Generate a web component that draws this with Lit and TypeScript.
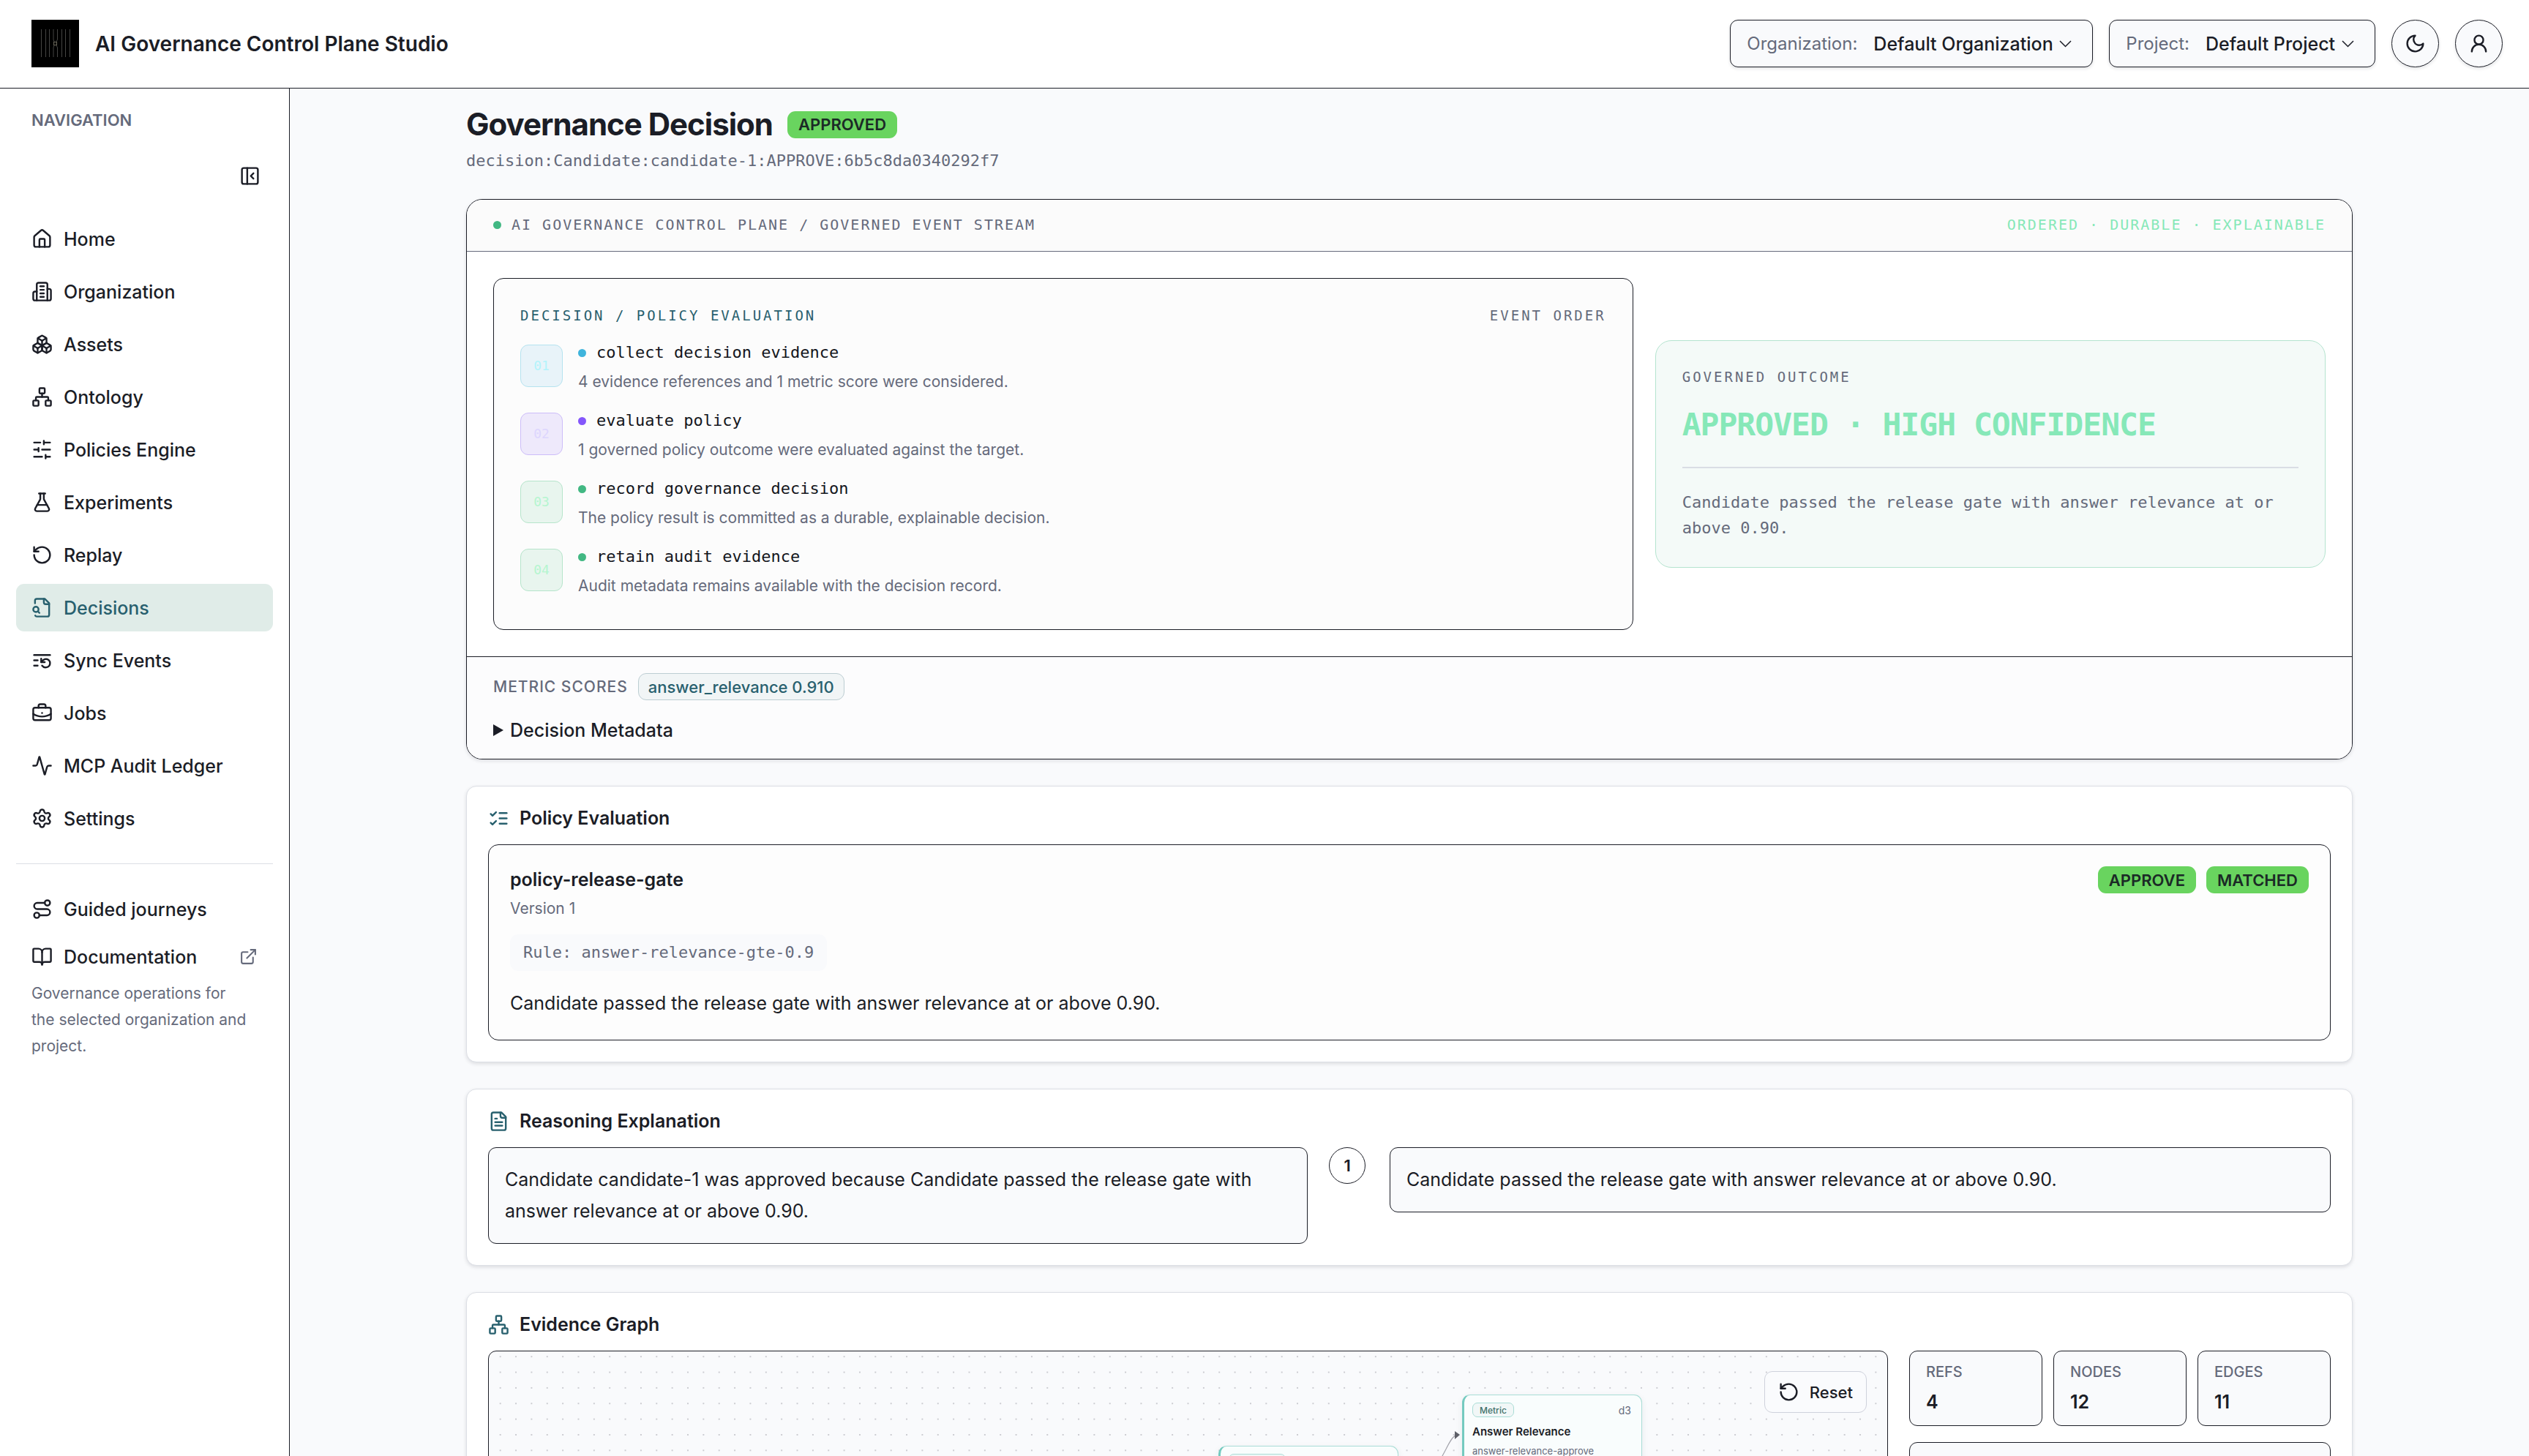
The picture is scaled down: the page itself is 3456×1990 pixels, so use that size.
import { LitElement, html, css, svg, nothing, type TemplateResult } from "lit";
import { customElement, property } from "lit/decorators.js";

/* Stroke icons on a 24-unit grid */
const ICONS: Record<string, TemplateResult> = {
  home: svg`<path d="M15 21v-8a1 1 0 0 0-1-1h-4a1 1 0 0 0-1 1v8"/><path d="M3 10a2 2 0 0 1 .709-1.528l7-6a2 2 0 0 1 2.582 0l7 6A2 2 0 0 1 21 10v9a2 2 0 0 1-2 2H5a2 2 0 0 1-2-2z"/>`,
  building: svg`<path d="M6 22V4a2 2 0 0 1 2-2h8a2 2 0 0 1 2 2v18Z"/><path d="M6 12H4a2 2 0 0 0-2 2v6a2 2 0 0 0 2 2h2"/><path d="M18 9h2a2 2 0 0 1 2 2v9a2 2 0 0 1-2 2h-2"/><path d="M10 6h4"/><path d="M10 10h4"/><path d="M10 14h4"/><path d="M10 18h4"/>`,
  boxes: svg`<path d="M2.97 12.92A2 2 0 0 0 2 14.63v3.24a2 2 0 0 0 .97 1.71l3 1.8a2 2 0 0 0 2.06 0L12 19v-5.5l-5-3-4.03 2.42Z"/><path d="m7 16.5-4.74-2.85"/><path d="m7 16.5 5-3"/><path d="M7 16.5v5.17"/><path d="M12 13.5V19l3.97 2.38a2 2 0 0 0 2.06 0l3-1.8a2 2 0 0 0 .97-1.71v-3.24a2 2 0 0 0-.97-1.71L17 10.5l-5 3Z"/><path d="m17 16.5-5-3"/><path d="m17 16.5 4.74-2.85"/><path d="M17 16.5v5.17"/><path d="M7.97 4.42A2 2 0 0 0 7 6.13v4.37l5 3 5-3V6.13a2 2 0 0 0-.97-1.71l-3-1.8a2 2 0 0 0-2.06 0l-3 1.8Z"/><path d="M12 8 7.26 5.15"/><path d="m12 8 4.74-2.85"/><path d="M12 13.5V8"/>`,
  network: svg`<rect x="16" y="16" width="6" height="6" rx="1"/><rect x="2" y="16" width="6" height="6" rx="1"/><rect x="9" y="2" width="6" height="6" rx="1"/><path d="M5 16v-3a1 1 0 0 1 1-1h12a1 1 0 0 1 1 1v3"/><path d="M12 12V8"/>`,
  sliders: svg`<path d="M21 4H14M10 4H3M21 12H12M8 12H3M21 20H16M12 20H3M14 2v4M8 10v4M16 18v4"/>`,
  flask: svg`<path d="M14 2v6a2 2 0 0 0 .245.96l5.51 10.08A2 2 0 0 1 18 22H6a2 2 0 0 1-1.755-2.96l5.51-10.08A2 2 0 0 0 10 8V2"/><path d="M6.453 15h11.094"/><path d="M8.5 2h7"/>`,
  replay: svg`<path d="M3 12a9 9 0 1 0 9-9 9.75 9.75 0 0 0-6.74 2.74L3 8"/><path d="M3 3v5h5"/>`,
  decisions: svg`<path d="M14 2v4a2 2 0 0 0 2 2h4"/><path d="M4.268 21a2 2 0 0 0 1.727 1H18a2 2 0 0 0 2-2V7l-5-5H6a2 2 0 0 0-2 2v3"/><path d="m9 18-1.5-1.5"/><circle cx="5" cy="14" r="3"/>`,
  sync: svg`<path d="M21 6H3"/><path d="M7 12H3"/><path d="M7 18H3"/><path d="M12 18a5 5 0 0 0 9-3 4.5 4.5 0 0 0-4.5-4.5c-1.33 0-2.54.54-3.41 1.41L11 14"/><path d="M11 10v4h4"/>`,
  briefcase: svg`<path d="M12 12h.01"/><path d="M16 6V4a2 2 0 0 0-2-2h-4a2 2 0 0 0-2 2v2"/><path d="M22 13a18.15 18.15 0 0 1-20 0"/><rect width="20" height="14" x="2" y="6" rx="2"/>`,
  activity: svg`<path d="M22 12h-2.48a2 2 0 0 0-1.93 1.46l-2.35 8.36a.25.25 0 0 1-.48 0L9.24 2.18a.25.25 0 0 0-.48 0l-2.35 8.36A2 2 0 0 1 4.49 12H2"/>`,
  settings: svg`<path d="M9.671 4.136a2.34 2.34 0 0 1 4.659 0 2.34 2.34 0 0 0 3.319 1.915 2.34 2.34 0 0 1 2.33 4.033 2.34 2.34 0 0 0 0 3.831 2.34 2.34 0 0 1-2.33 4.033 2.34 2.34 0 0 0-3.319 1.915 2.34 2.34 0 0 1-4.659 0 2.34 2.34 0 0 0-3.32-1.915 2.34 2.34 0 0 1-2.33-4.033 2.34 2.34 0 0 0 0-3.831A2.34 2.34 0 0 1 6.35 6.051a2.34 2.34 0 0 0 3.319-1.915"/><circle cx="12" cy="12" r="3"/>`,
  route: svg`<circle cx="6" cy="19" r="3"/><path d="M9 19h8.5a3.5 3.5 0 0 0 0-7h-11a3.5 3.5 0 0 1 0-7H15"/><circle cx="18" cy="5" r="3"/>`,
  book: svg`<path d="M12 7v14"/><path d="M3 18a1 1 0 0 1-1-1V4a1 1 0 0 1 1-1h5a4 4 0 0 1 4 4 4 4 0 0 1 4-4h5a1 1 0 0 1 1 1v13a1 1 0 0 1-1 1h-6a3 3 0 0 0-3 3 3 3 0 0 0-3-3z"/>`,
  external: svg`<path d="M15 3h6v6"/><path d="M10 14 21 3"/><path d="M18 13v6a2 2 0 0 1-2 2H5a2 2 0 0 1-2-2V8a2 2 0 0 1 2-2h6"/>`,
  checks: svg`<path d="m3 17 2 2 4-4"/><path d="m3 7 2 2 4-4"/><path d="M13 6h8"/><path d="M13 12h8"/><path d="M13 18h8"/>`,
  document: svg`<path d="M15 2H6a2 2 0 0 0-2 2v16a2 2 0 0 0 2 2h12a2 2 0 0 0 2-2V7Z"/><path d="M14 2v4a2 2 0 0 0 2 2h4"/><path d="M10 9H8"/><path d="M16 13H8"/><path d="M16 17H8"/>`,
  moon: svg`<path d="M12 3a6 6 0 0 0 9 9 9 9 0 1 1-9-9Z"/>`,
  user: svg`<circle cx="12" cy="8" r="5"/><path d="M20 21a8 8 0 0 0-16 0"/>`,
  collapse: svg`<rect width="18" height="18" x="3" y="3" rx="2"/><path d="M9 3v18"/><path d="m16 15-3-3 3-3"/>`,
};

@customElement("line-icon")
class LineIcon extends LitElement {
  @property() name = "";
  static styles = css`
    :host { display: inline-flex; flex: none; width: 29px; height: 29px; }
    svg { width: 100%; height: 100%; fill: none; stroke: currentColor; stroke-width: 2; stroke-linecap: round; stroke-linejoin: round; }
  `;
  render() {
    return html`<svg viewBox="0 0 24 24" aria-hidden="true">${ICONS[this.name]}</svg>`;
  }
}

const NAV = [
  { label: "Home", icon: "home" },
  { label: "Organization", icon: "building" },
  { label: "Assets", icon: "boxes" },
  { label: "Ontology", icon: "network" },
  { label: "Policies Engine", icon: "sliders" },
  { label: "Experiments", icon: "flask" },
  { label: "Replay", icon: "replay" },
  { label: "Decisions", icon: "decisions", active: true },
  { label: "Sync Events", icon: "sync" },
  { label: "Jobs", icon: "briefcase" },
  { label: "MCP Audit Ledger", icon: "activity" },
  { label: "Settings", icon: "settings" },
];

const STEPS = [
  { no: "01", tone: "cyan", title: "collect decision evidence", text: "4 evidence references and 1 metric score were considered." },
  { no: "02", tone: "violet", title: "evaluate policy", text: "1 governed policy outcome were evaluated against the target." },
  { no: "03", tone: "green", title: "record governance decision", text: "The policy result is committed as a durable, explainable decision." },
  { no: "04", tone: "green", title: "retain audit evidence", text: "Audit metadata remains available with the decision record." },
];

const STATS = [
  { label: "REFS", value: 4 },
  { label: "NODES", value: 12 },
  { label: "EDGES", value: 11 },
];

const NODES = [
  { kind: "Metric", depth: "d3", title: "Answer Relevance", id: "answer-relevance-approve", x: 1330, y: 59 },
  { kind: "", depth: "", title: "", id: "", x: 997, y: 129 },
];

@customElement("app-root")
class AppRoot extends LitElement {
  static styles = css`
    :host {
      --ink: #1b1d26;
      --muted: #656a7b;
      --teal: #28606e;
      --page: #f9fafc;
      --soft: #dcdfe5;
      --mono: "DejaVu Sans Mono", "Liberation Mono", monospace;
      display: flex;
      flex-direction: column;
      height: 100vh;
      overflow: hidden;
      background: #fff;
      color: var(--ink);
      font: 400 25px/36px Inter, "Liberation Sans", sans-serif;
    }
    * { box-sizing: border-box; }
    h1, h2, h3, p, ul, ol, dl, dd { margin: 0; padding: 0; }
    ul, ol { list-style: none; }
    button, select { font: inherit; color: inherit; }
    a { color: inherit; text-decoration: none; }

    .topbar { flex: none; display: flex; justify-content: space-between; align-items: flex-start; padding: 27px 36px 28px 43px; border-bottom: 1px solid var(--ink); }
    .brand { display: flex; align-items: center; gap: 22px; font-size: 28px; font-weight: 600; }
    .logo { width: 65px; height: 65px; display: block; }
    .tools { display: flex; gap: 22px; }
    .picker, .round { border: 1px solid var(--ink); background: var(--page); box-shadow: 0 2px 4px rgba(20, 24, 40, 0.12); }
    .picker { display: flex; align-items: center; height: 65px; padding: 0 28px 0 22px; border-radius: 11px; }
    .picker-label { color: var(--muted); margin-right: 22px; font-size: 24px; }
    .picker select { appearance: none; border: 0; padding: 0; margin: 0; background: none; font-weight: 500; outline: none; }
    .chev { width: 17px; height: 10px; margin-left: 8px; fill: none; stroke: var(--ink); stroke-width: 1.5; }
    .round { display: flex; align-items: center; justify-content: center; width: 65px; height: 65px; padding: 0; border-radius: 50%; }

    .body { flex: 1; min-height: 0; display: flex; }
    .sidebar { flex: none; display: flex; flex-direction: column; width: 396px; padding: 22px; border-right: 1px solid var(--ink); font-weight: 500; }
    .nav-title { padding: 3px 21px 5px; font-size: 22px; line-height: 36px; font-weight: 600; color: var(--muted); }
    .collapse { align-self: flex-end; display: flex; margin: 39px 17px 39px 0; padding: 0; border: 0; background: none; }
    .nav-list { display: flex; flex-direction: column; gap: 7px; }
    .nav-link { display: flex; align-items: center; gap: 15px; height: 65px; padding: 0 21px; border-radius: 11px; }
    .nav-link.active { background: #e0ece8; color: var(--teal); }
    .nav-foot { margin-top: 29px; padding-top: 29px; border-top: 1px solid var(--soft); }
    .ext { width: 25px; height: 25px; margin-left: auto; color: var(--muted); }
    .nav-note { padding: 0 32px 0 21px; font-size: 21px; font-weight: 400; color: var(--muted); }

    main { flex: 1; min-width: 0; overflow-y: auto; scrollbar-width: none; background: var(--page); }
    .content { max-width: 2578px; margin: 0 auto; padding: 24px 0 60px; display: flex; flex-direction: column; gap: 36px; }
    .title-row { display: flex; align-items: center; gap: 20px; }
    h1 { font-size: 42px; line-height: 50px; font-weight: 700; letter-spacing: -1px; }
    .badge { display: inline-flex; align-items: center; height: 37px; padding: 0 15px; border-radius: 11px; background: #69d45f; color: #1b2a26; font-size: 22px; line-height: 30px; font-weight: 600; }
    .ident { margin-top: 8px; font: 22px/33px var(--mono); color: var(--muted); }

    .card { border: 1px solid var(--soft); border-radius: 14px; background: #fff; box-shadow: 0 2px 5px rgba(20, 24, 40, 0.13); }
    .card.decision { border-color: var(--ink); border-radius: 22px; overflow: hidden; }
    .card.section { padding: 29px; }
    .box { border: 1px solid var(--ink); border-radius: 14px; background: var(--page); }
    .caps { font: 20px/30px var(--mono); letter-spacing: 2px; color: var(--muted); }
    .caps.wide { font-size: 19px; letter-spacing: 3px; }
    .caps.teal { color: var(--teal); }
    .caps.mint { color: #86e8b8; }
    .stream-head { display: flex; justify-content: space-between; align-items: center; height: 71px; padding: 0 36px 2px; background: #fbfbfb; border-bottom: 1px solid var(--muted); }
    .dot { flex: none; width: 11px; height: 11px; border-radius: 50%; background: #42b883; }
    .stream-name { display: flex; align-items: center; gap: 14px; }
    .stream-body { display: grid; grid-template-columns: minmax(0, 17fr) minmax(0, 10fr); gap: 30px; align-items: center; padding: 36px; }
    .steps-box { padding: 35px 36px 41px; background: #fcfcfc; }
    .steps-head { display: flex; justify-content: space-between; margin-bottom: 18px; }
    .steps { display: flex; flex-direction: column; gap: 17px; }
    .step { display: flex; gap: 21px; }
    .step-no { flex: none; display: flex; align-items: center; justify-content: center; width: 58px; height: 58px; margin-top: 7px; border: 1px solid; border-radius: 11px; font: 18px/24px var(--mono); }
    .cyan .step-no { background: #e8f3f9; border-color: #b5e3ef; color: #b3f3fc; }
    .violet .step-no { background: #eee9fb; border-color: #cdbdf9; color: #ddd6fe; }
    .green .step-no { background: #e8f5ee; border-color: #b6e5cb; color: #b5f5d0; }
    .cyan .dot { background: #3fb4dc; }
    .violet .dot { background: #8456fb; }
    .step-title { display: flex; align-items: center; gap: 14px; font: 22px/36px var(--mono); color: #14161c; }
    .step-text { margin-top: 4px; font-size: 21px; color: var(--muted); }
    .outcome { padding: 36px; border: 1px solid #b4e4cf; border-radius: 22px; background: #f4faf8; }
    .outcome .caps { line-height: 26px; }
    .verdict { margin-top: 22px; font: 700 43px/60px var(--mono); letter-spacing: -1px; color: #86e8b8; }
    .reason { margin-top: 28px; padding-top: 29px; border-top: 2px solid #d9dde4; font: 22px/35px var(--mono); color: var(--muted); }
    .stream-foot { display: flex; flex-direction: column; gap: 23px; padding: 22px 36px 21px; background: #fcfcfd; border-top: 1px solid var(--ink); }
    .scores { display: flex; align-items: center; gap: 14px; line-height: 30px; font-weight: 500; color: var(--muted); }
    .scores-label { font-size: 21px; letter-spacing: 1px; }
    .chip { display: inline-flex; align-items: center; height: 37px; padding: 0 13px; border: 1px solid #bccdd2; border-radius: 11px; background: #f1f5f6; color: var(--teal); font-size: 22px; }
    summary { display: flex; align-items: center; gap: 9px; font-weight: 500; list-style: none; }
    summary::before { content: ""; border-left: 14px solid var(--ink); border-top: 8px solid transparent; border-bottom: 8px solid transparent; }

    .head { display: flex; align-items: center; gap: 14px; margin-bottom: 21px; line-height: 29px; font-size: 25px; font-weight: 600; }
    .head line-icon { color: var(--teal); }
    .policy { display: flex; flex-direction: column; align-items: flex-start; padding: 29px; background: #fdfdfd; }
    .policy-top { align-self: stretch; display: flex; justify-content: space-between; align-items: flex-start; }
    .policy h3 { font-size: 25px; font-weight: 600; }
    .badges { display: flex; gap: 14px; }
    .version { margin-top: 6px; font-size: 21px; line-height: 30px; color: var(--muted); }
    .rule { margin: 20px 0 24px; padding: 7px 18px; border-radius: 11px; background: #f9fafc; font: 22px/36px var(--mono); color: var(--muted); }
    .policy-text { line-height: 41px; }

    .reasoning { display: grid; grid-template-columns: minmax(0, 9fr) minmax(0, 11fr); gap: 29px; align-items: start; }
    .statement { padding: 22px; line-height: 43px; border-radius: 11px; }
    .factor { display: flex; align-items: flex-start; gap: 33px; }
    .factor .statement { flex: 1; }
    .count { flex: none; display: flex; align-items: center; justify-content: center; width: 50px; height: 50px; border: 1px solid var(--ink); border-radius: 50%; font-size: 22px; font-weight: 600; }

    .evidence { display: grid; grid-template-columns: minmax(0, 1fr) 576px; gap: 29px; }
    .graph { position: relative; min-height: 1040px; border-radius: 11px; overflow: hidden; }
    .canvas { position: absolute; inset: 0; width: 100%; height: 100%; }
    .reset { position: absolute; top: 27px; right: 28px; display: flex; align-items: center; gap: 14px; height: 57px; padding: 0 18px; border: 1px solid #cfd2dc; border-radius: 11px; background: #fafbfd; font-size: 22px; font-weight: 500; }
    .node { position: absolute; width: 246px; height: 108px; padding: 10px 14px 8px 11px; border: 1px solid #a9ddd6; border-left: 3px solid #74cabf; border-radius: 11px; background: #f9fdfd; box-shadow: 0 3px 10px rgba(20, 60, 60, 0.08); }
    .node-top { display: flex; justify-content: space-between; align-items: center; font-size: 14px; line-height: 19px; color: var(--muted); }
    .kind { display: inline-flex; align-items: center; height: 20px; padding: 0 9px; border: 1px solid #a9ddd6; border-radius: 7px; background: #f1f7f7; color: #3f6f69; font-size: 12px; font-weight: 500; }
    .kind:empty { width: 78px; }
    .node-title { margin-top: 9px; font-size: 15px; line-height: 22px; font-weight: 600; }
    .node-id { margin-top: 5px; font-size: 13px; line-height: 20px; color: var(--muted); }
    .side { display: flex; flex-direction: column; gap: 22px; }
    .stats { display: grid; grid-template-columns: repeat(3, minmax(0, 1fr)); gap: 15px; }
    .stat { padding: 14px 22px; border-radius: 11px; }
    .stat dt { font-size: 20px; line-height: 29px; font-weight: 500; color: var(--muted); }
    .stat dd { margin-top: 8px; font-weight: 600; }
    .panel { flex: 1; border-radius: 11px; }
  `;

  private picker(id: string, label: string, value: string) {
    return html`<div class="picker">
      <label class="picker-label" for=${id}>${label}</label>
      <select id=${id}><option>${value}</option></select>
      <svg class="chev" viewBox="0 0 17 10" aria-hidden="true"><path d="M1 1l7.500 7.500L16 1"/></svg>
    </div>`;
  }

  private logo() {
    const bars = [13, 19, 24, 41, 46, 52];
    return html`<svg class="logo" viewBox="0 0 65 65" role="img" aria-label="Studio logo">
      <rect width="65" height="65" fill="#000"/>
      <g fill="none" stroke="#454543" stroke-width="1">
        ${bars.map((x) => svg`<path d="M${x + 0.5} 13V51"/>`)}
        <path d="M30 13V27L31 30M30 51V38L31 35M35.500 13V27L34 30M35.500 51V38L34 35"/>
        <rect x="30.500" y="30.500" width="4" height="4" stroke="#6a675a"/>
      </g>
    </svg>`;
  }

  render() {
    return html`
      <header class="topbar">
        <div class="brand">${this.logo()}<span>AI Governance Control Plane Studio</span></div>
        <div class="tools">
          ${this.picker("organization", "Organization:", "Default Organization")}
          ${this.picker("project", "Project:", "Default Project")}
          <button class="round" aria-label="Toggle theme"><line-icon name="moon"></line-icon></button>
          <button class="round" aria-label="Account"><line-icon name="user"></line-icon></button>
        </div>
      </header>
      <div class="body">
        <nav class="sidebar">
          <div class="nav-title">NAVIGATION</div>
          <button class="collapse" aria-label="Collapse navigation"><line-icon name="collapse"></line-icon></button>
          <ul class="nav-list">
            ${NAV.map((item) => html`<li><a class="nav-link ${item.active ? "active" : ""}" href="#"><line-icon name=${item.icon}></line-icon>${item.label}</a></li>`)}
          </ul>
          <div class="nav-foot">
            <a class="nav-link" href="#"><line-icon name="route"></line-icon>Guided journeys</a>
            <a class="nav-link" href="#"><line-icon name="book"></line-icon>Documentation<line-icon class="ext" name="external"></line-icon></a>
            <p class="nav-note">Governance operations for the selected organization and project.</p>
          </div>
        </nav>
        <main>
          <div class="content">
            <div>
              <div class="title-row"><h1>Governance Decision</h1><span class="badge">APPROVED</span></div>
              <p class="ident">decision:Candidate:candidate-1:APPROVE:6b5c8da0340292f7</p>
            </div>
            ${this.decisionCard()} ${this.policyCard()} ${this.reasoningCard()} ${this.evidenceCard()}
          </div>
        </main>
      </div>
    `;
  }

  private decisionCard() {
    return html`<section class="card decision">
      <div class="stream-head">
        <div class="stream-name"><span class="dot"></span><span class="caps">AI GOVERNANCE CONTROL PLANE / GOVERNED EVENT STREAM</span></div>
        <span class="caps mint">ORDERED · DURABLE · EXPLAINABLE</span>
      </div>
      <div class="stream-body">
        <div class="box steps-box">
          <div class="steps-head"><span class="caps wide teal">DECISION / POLICY EVALUATION</span><span class="caps wide">EVENT ORDER</span></div>
          <ol class="steps">
            ${STEPS.map((s) => html`<li class="step ${s.tone}">
              <span class="step-no">${s.no}</span>
              <div><div class="step-title"><span class="dot"></span>${s.title}</div><p class="step-text">${s.text}</p></div>
            </li>`)}
          </ol>
        </div>
        <div class="outcome">
          <div class="caps wide">GOVERNED OUTCOME</div>
          <div class="verdict">APPROVED · HIGH CONFIDENCE</div>
          <p class="reason">Candidate passed the release gate with answer relevance at or above 0.90.</p>
        </div>
      </div>
      <div class="stream-foot">
        <div class="scores"><span class="scores-label">METRIC SCORES</span><span class="chip">answer_relevance 0.910</span></div>
        <details><summary>Decision Metadata</summary></details>
      </div>
    </section>`;
  }

  private policyCard() {
    return html`<section class="card section">
      <h2 class="head"><line-icon name="checks"></line-icon>Policy Evaluation</h2>
      <div class="box policy">
        <div class="policy-top">
          <h3>policy-release-gate</h3>
          <div class="badges"><span class="badge">APPROVE</span><span class="badge">MATCHED</span></div>
        </div>
        <p class="version">Version 1</p>
        <div class="rule">Rule: answer-relevance-gte-0.9</div>
        <p class="policy-text">Candidate passed the release gate with answer relevance at or above 0.90.</p>
      </div>
    </section>`;
  }

  private reasoningCard() {
    return html`<section class="card section">
      <h2 class="head"><line-icon name="document"></line-icon>Reasoning Explanation</h2>
      <div class="reasoning">
        <p class="box statement">Candidate candidate-1 was approved because Candidate passed the release gate with answer relevance at or above 0.90.</p>
        <div class="factor">
          <span class="count">1</span>
          <p class="box statement">Candidate passed the release gate with answer relevance at or above 0.90.</p>
        </div>
      </div>
    </section>`;
  }

  private evidenceCard() {
    return html`<section class="card section">
      <h2 class="head"><line-icon name="network"></line-icon>Evidence Graph</h2>
      <div class="evidence">
        <div class="box graph">
          <svg class="canvas" aria-hidden="true">
            <defs><pattern id="grid" x="5" y="-3.500" width="21.360" height="21.360" patternUnits="userSpaceOnUse"><circle cx="10.700" cy="10.700" r="0.800" fill="#91919a"/></pattern></defs>
            <rect width="100%" height="100%" fill="url(#grid)"/>
            <path d="M1244 184C1300 184 1306 122 1321 115" fill="none" stroke="#a3a3ab" stroke-width="1.200"/>
            <path d="M1320 109L1327 114L1320 120Z" fill="#5e6068"/>
          </svg>
          ${NODES.map((n) => html`<div class="node" style="left:${n.x}px;top:${n.y}px">
            <div class="node-top"><span class="kind">${n.kind || nothing}</span><span>${n.depth}</span></div>
            <div class="node-title">${n.title}</div>
            <div class="node-id">${n.id}</div>
          </div>`)}
          <button class="reset"><line-icon name="replay"></line-icon>Reset</button>
        </div>
        <div class="side">
          <dl class="stats">
            ${STATS.map((s) => html`<div class="box stat"><dt>${s.label}</dt><dd>${s.value}</dd></div>`)}
          </dl>
          <div class="box panel"></div>
        </div>
      </div>
    </section>`;
  }
}
